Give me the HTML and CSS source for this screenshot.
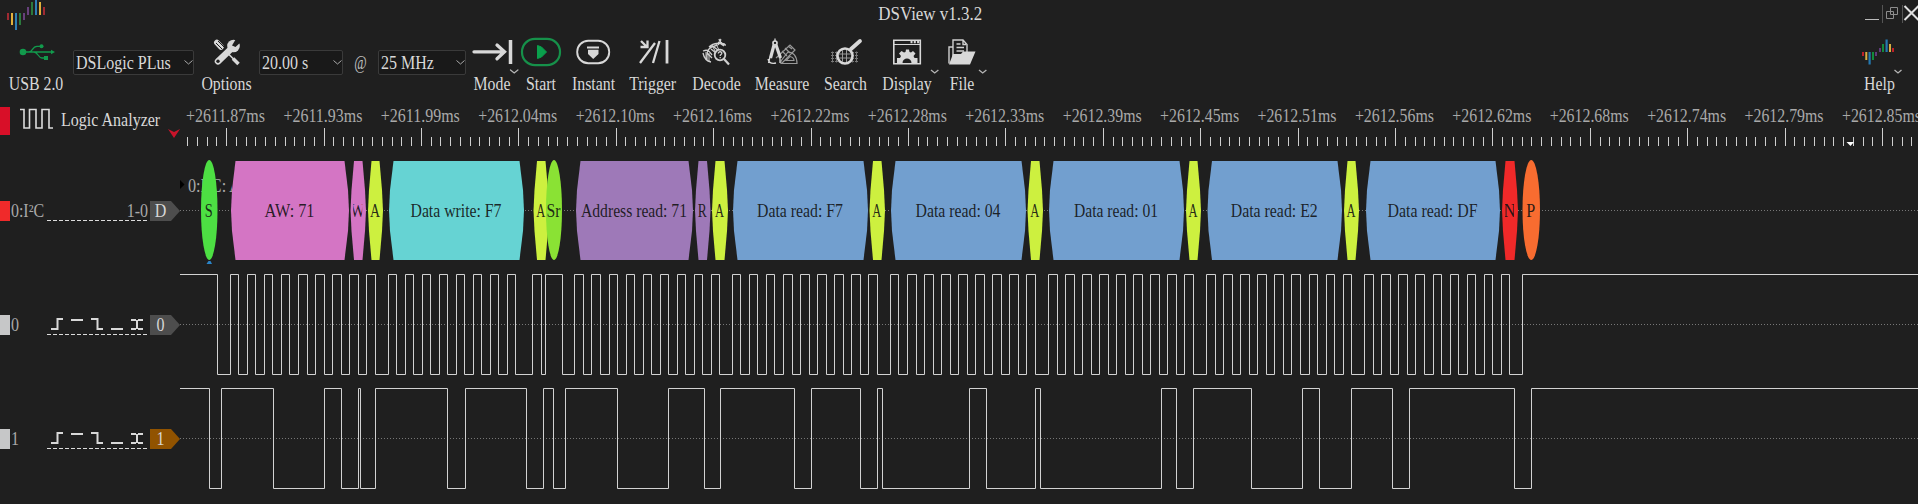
FILE: index.html
```html
<!DOCTYPE html>
<html lang="en">
<head>
<meta charset="utf-8">
<title>DSView v1.3.2</title>
<link rel="stylesheet" href="styles.css">
</head>
<body>
<header class="titlebar">
  <svg class="logo" width="46" height="32" viewBox="0 0 46 32">
    <path fill="#a02a32" d="M7 13h2v7h-2zM43 7h2v8h-2z"/><path fill="#e2b13c" d="M11 13h2v12h-2zM39 2h2v13h-2z"/>
    <path fill="#2f7fb5" d="M15 13h2v17h-2zM35 0h2v15h-2z"/><path fill="#2b7a3c" d="M19 13h2v12h-2zM31 2h2v13h-2z"/>
    <path fill="#67407c" d="M23 13h2v7h-2zM27 7h2v8h-2z"/>
  </svg>
  <h1 class="title">DSView v1.3.2</h1>
  <svg class="window-buttons" width="54" height="32" viewBox="0 0 54 32" fill="none">
    <path stroke="#bbb" d="M1 19.5h14"/><path stroke="#555" d="M18.500 5v18M38.500 5v18"/>
    <path stroke="#8d8d8d" d="M26.500 7.500h7v7h-7zM22.500 11.500h7v7h-7z"/>
    <path stroke="#e0e0e0" stroke-width="2" d="M40.500 6l14 14M54.500 6l-14 14"/>
  </svg>
</header>

<nav class="toolbar">
  <div class="tool tool-usb">
    <svg class="icon" viewBox="-20 0 40 34" fill="none" stroke="#129a4c" stroke-width="1.300">
      <circle cx="-14" cy="14" r="3.300" fill="#129a4c" stroke="none"/><path d="M-14 14H15M-8 14C-4 14-5 8.300 0 8.300h3M-3 14C1 14 1 20 5 20h4"/>
      <path fill="#129a4c" stroke="none" d="M14 11.700l4 2.300-4 2.300zM7 18h4v4h-4z"/><circle cx="4.500" cy="8.300" r="2" fill="#129a4c" stroke="none"/>
    </svg><span class="label">USB 2.0</span></div>
  <div class="combo combo-device"><span class="text">DSLogic PLus</span><svg class="caret" viewBox="0 0 9 5"><path d="M.5 .5l4 3.500 4-3.500"/></svg></div>
  <div class="tool tool-options">
    <svg class="icon" viewBox="-20 0 40 34" fill="none" stroke="#d8d8d8">
      <path stroke-width="5.500" stroke-linecap="round" d="M-10.200 4.500L-6 9"/><path stroke="#1f1f1f" stroke-width="1" d="M-11 5l6 6M-9 3l6 6"/>
      <path stroke-width="1.600" d="M1 15.500l6 6"/><path stroke-width="3.500" d="M6 20.500l5.500 5.500"/>
      <path stroke-width="6.500" stroke-linecap="round" d="M-9 23.300L6 9"/><circle cx="6.500" cy="8" r="6.300" fill="#d8d8d8" stroke="none"/>
      <path fill="#1f1f1f" stroke="none" d="M5 7.500L9.500 0l5 3.500L8.500 9z"/><circle cx="-9" cy="23.300" r="1.700" fill="#1f1f1f" stroke="none"/>
    </svg><span class="label">Options</span></div>
  <div class="combo combo-duration"><span class="text">20.00 s</span><svg class="caret" viewBox="0 0 9 5"><path d="M.5 .5l4 3.500 4-3.500"/></svg></div>
  <div class="at"><span class="label">@</span></div>
  <div class="combo combo-rate"><span class="text">25 MHz</span><svg class="caret" viewBox="0 0 9 5"><path d="M.5 .5l4 3.500 4-3.500"/></svg></div>
  <div class="tool tool-mode">
    <svg class="icon" viewBox="-20 4 40 34" fill="none" stroke="#d8d8d8" stroke-linecap="round">
      <path stroke-width="3.300" d="M-18 17.800H12M5 11l7.500 6.800-7.500 7"/><path stroke-width="3.500" stroke-linecap="butt" d="M18.500 6v24"/>
      <path class="menu-mark" d="M18.500 36l3.700 3 3.700-3"/>
    </svg><span class="label">Mode</span></div>
  <div class="tool tool-start">
    <svg class="icon" viewBox="-20 4 40 34" fill="none"><rect x="-19" y="4.800" width="38" height="26.400" rx="13" stroke="#16914a" stroke-width="2.200"/><path fill="#0aa04c" stroke="#0aa04c" stroke-linejoin="round" d="M-3.500 11.500v13l4-1.500 5-5-5-5z"/></svg><span class="label">Start</span></div>
  <div class="tool tool-instant">
    <svg class="icon" viewBox="-20 4 40 34" fill="none"><rect x="-15.800" y="6.800" width="32" height="22.400" rx="11" stroke="#d8d8d8" stroke-width="1.900"/><path fill="#d8d8d8" d="M-6 12.500H6v2H-6zM-5 15.800H5.500V20L.2 25-5 20z"/></svg><span class="label">Instant</span></div>
  <div class="tool tool-trigger">
    <svg class="icon" viewBox="-20 4 40 34" fill="none" stroke="#d8d8d8" stroke-width="2.300"><path d="M-12 7l6 6M-12.500 13h7v-6.500M-13 29L2 9M0 29L6.500 7" /><path stroke-width="2.800" d="M14 6v23.500"/></svg><span class="label">Trigger</span></div>
  <div class="tool tool-decode">
    <svg class="icon" viewBox="-20 4 40 34" fill="none" stroke="#d0d0d0" stroke-width="1.300">
      <path d="M-13 17c5-2 6 0 9 4M-13 19c1 5 3 8 8 9M-9 27c0-5-1-9 2-12 4-5 8-1 11-6 1-1 0-3 1-4M-7 13c5-5 13-4 16-3M3 5c1 4 3 6 7 6M-9 19l5 5M-5 15l5 4M-2 13l5 4M2 8l6 4"/>
      <path stroke-width="1" d="M-10 18v7M-7 19v8M-4 11l4 8M0 10l3 6M4 7l4 4"/>
      <circle cx="4" cy="21" r="5.300" fill="#1f1f1f" stroke-width="1.800"/><path stroke-width="2.200" d="M8 25l5 5.500"/><path d="M2.300 19.500c0-2.500 3.800-2.200 3.500 0-.2 1.200-1.600 1-1.600 2.400m0 1v1.300"/>
    </svg><span class="label">Decode</span></div>
  <div class="tool tool-measure">
    <svg class="icon" viewBox="-20 4 40 34" fill="none" stroke="#999" stroke-width="1.200">
      <path d="M-6 24L8 11l5 5L0 29M0 17l5 5M3 14l5 5M6 12l4 3"/><path d="M-1 29.500V27L6 18c5 0 9 4 9 11.500zM4 26.500l4-4c2 .5 4 2 4 4z"/>
      <circle cx="-7" cy="9" r="2" stroke="#d8d8d8" stroke-width="1.700"/><path stroke="#d8d8d8" stroke-width="1.300" d="M-7 4.500v3"/>
      <path stroke="#d8d8d8" stroke-width="3.200" d="M-8 11L-11.500 24M-6 11l4.500 13"/><path stroke="#d8d8d8" stroke-width="1.300" d="M-12 23l-1.500 6M-2 23l0 6M-14 25c1 4 4 5 8 4"/>
    </svg><span class="label">Measure</span></div>
  <div class="tool tool-search">
    <svg class="icon" viewBox="-20 4 40 34" fill="none" stroke="#777" stroke-width="1">
      <path stroke-dasharray="3 1" d="M-15 18.500h27M-15 21.500h27M-15 24.500h27M-15 27.500h27"/><path stroke-dasharray="1 3" stroke-width="11" d="M-14 23h26"/>
      <path stroke="#d8d8d8" stroke-width="3.800" stroke-linecap="round" d="M5 15L14 7"/><circle cx="-1" cy="22" r="7.500" fill="#1f1f1f" stroke="#d8d8d8" stroke-width="2.600"/>
      <path stroke="#999" d="M-7 20h12M-7 24h12M-3.500 16v12M.5 16v12"/>
    </svg><span class="label">Search</span></div>
  <div class="tool tool-display">
    <svg class="icon" viewBox="-20 4 40 34" fill="none" stroke="#d8d8d8"><path stroke-width="1.600" d="M-13.200 6.300h26.500v23.500h-26.500z"/><path d="M-13 10.500h26"/><path stroke-width="2.200" stroke-dasharray="2 1.300" d="M3.500 8.100h9"/>
      <path fill="#d8d8d8" stroke="none" d="M-10 29v-5h3l1-2-2-2.500 2.500-2.500 2.500 1.500 1.500-.5.500-2.500h3l.5 2.500 1.500.5L6 17l2.500 2.500-2 2.500 1 2h3v5H4.500c0-6-9-6-9 0z"/>
      <path class="menu-mark" d="M24 36l3.700 3 3.700-3"/>
    </svg><span class="label">Display</span></div>
  <div class="tool tool-file">
    <svg class="icon" viewBox="-20 4 40 34" fill="none" stroke="#d0d0d0" stroke-width="1.400"><path d="M-9 26V6H1l4 4.500v7.500M1 6v4.500H4M-5.500 10h4M-5.500 13.500H2M-5.500 17H2M-9 13h-4v16.500"/>
      <path fill="#d8d8d8" stroke="none" d="M-13 30.500L-9 20h8l2-2.500h12.500L8 30.500z"/><path class="menu-mark" d="M17 36l3.700 3 3.700-3"/>
    </svg><span class="label">File</span></div>
  <div class="tool tool-help">
    <svg class="icon" viewBox="-20 0 40 34">
      <path fill="#bd2028" d="M-17 14h2v4h-2zM13 10h2v4h-2z"/><path fill="#d9ae42" d="M-13.700 14h2v8h-2zM10 6h2v8h-2z"/>
      <path fill="#2478b0" d="M-10.500 14h2.200v12.500h-2.200zM6.500 1.500h2.200V14H6.500z"/><path fill="#128a3c" d="M-7 14h2v8h-2zM3 6h2v8H3z"/>
      <path fill="#613a7c" d="M-4 14h2v4h-2zM0 10h2v4H0z"/><path class="menu-mark" d="M15.500 32l3.500 3 3.500-3"/>
    </svg><span class="label">Help</span></div>
</nav>

<main class="workspace">
  <aside class="channels">
    <div class="analyzer">
      <i class="analyzer-mark"></i>
      <svg class="analyzer-icon" width="34" height="22" viewBox="0 0 34 22" fill="none" stroke="#dcdcdc" stroke-width="1.600"><path d="M0 1.500h4V20h5.500V1.500h6.500V20h6V1.500h7V20h4"/></svg>
      <span class="text">Logic Analyzer</span>
      <svg class="cursor-mark" width="12" height="9" viewBox="0 0 12 9"><path fill="#c8142a" d="M0 0l6 3 6-3-6 9z"/></svg>
    </div>
    <div class="channel channel-decoder"><i class="swatch"></i><span class="text name">0:I²C</span><div class="slots"><span class="text pins">1-0</span></div><b class="tag"><span class="text">D</span></b></div>
    <div class="channel"><i class="swatch"></i><span class="text name">0</span><div class="slots"><svg class="edges" width="100" height="20" viewBox="0 0 100 20"><path d="M4 14h6.500V4H16M24 5h12M44 4h6.500v10H56M64 14h12M84 5h5M91 5h5M84 14h5M91 14h5M90 5v9"/></svg></div><b class="tag"><span class="text">0</span></b></div>
    <div class="channel channel-orange"><i class="swatch"></i><span class="text name">1</span><div class="slots"><svg class="edges" width="100" height="20" viewBox="0 0 100 20"><path d="M4 14h6.500V4H16M24 5h12M44 4h6.500v10H56M64 14h12M84 5h5M91 5h5M84 14h5M91 14h5M90 5v9"/></svg></div><b class="tag"><span class="text">1</span></b></div>
  </aside>
  <svg class="plot" id="plot" width="1738" height="404" viewBox="180 100 1738 404"></svg>
</main>
<script src="plot.js"></script>
</body>
</html>
```

FILE: styles.css
```css
* { box-sizing: border-box; }
body {
  margin: 0;
  width: 1918px;
  height: 504px;
  overflow: hidden;
  display: flex;
  flex-direction: column;
  background: #1f1f1f;
  color: #d8d8d8;
  font: 18px/20px "Liberation Serif", serif;
}
svg { display: block; flex: none; }

.titlebar { display: flex; justify-content: space-between; height: 32px; }
.title {
  margin: 0 50px 0 0;
  padding: 4px 0 0;
  font-size: 18px;
  font-weight: normal;
  line-height: 20px;
  transform: scaleX(.94);
}

.toolbar { display: flex; height: 68px; }
.tool { display: flex; flex-direction: column; align-items: center; padding-top: 6px; height: 68px; }
.tool .icon { width: 40px; height: 34px; overflow: visible; }
.label { white-space: nowrap; transform: scaleX(.88); margin-top: 2px; }
.menu-mark { fill: none; stroke: #b5b5b5; stroke-width: 1.3; }
.tool-usb { width: 73px; }
.tool-options { width: 65px; }
.tool-mode { width: 51px; }
.tool-start { width: 48px; }
.tool-instant { width: 56px; }
.tool-trigger { width: 63px; }
.tool-decode { width: 64px; }
.tool-measure { width: 68px; }
.tool-search { width: 59px; }
.tool-display { width: 63px; }
.tool-file { width: 48px; }
.tool-help { width: 78px; margin-left: auto; }

.combo {
  display: flex;
  align-items: center;
  justify-content: space-between;
  height: 25px;
  margin-top: 18px;
  padding: 0 0 0 2px;
  background: #191919;
  border: 1px solid #3a3a3a;
  border-radius: 2px;
}
.combo-device { width: 121px; }
.combo-duration { width: 84px; }
.combo-rate { width: 88px; }
.combo .text { width: 0; }
.caret { width: 9px; height: 5px; fill: none; stroke: #aaa; }
.text { display: block; white-space: nowrap; transform: scaleX(.89); transform-origin: left center; }
.at { width: 35px; padding-top: 19px; text-align: center; color: #c0c0c0; }
.at .label { display: block; transform: scaleX(.75); }

.workspace { display: flex; height: 404px; }
.channels { width: 180px; }
.analyzer { display: flex; height: 54px; padding-top: 7px; }
.analyzer-mark { width: 10px; height: 28px; background: #d80f28; }
.analyzer-icon { margin: 1px 7px 0 10px; }
.analyzer .text { width: 107px; margin-top: 3px; }
.cursor-mark { margin-top: 22px; }
.channel { display: flex; align-items: center; height: 114px; }
.swatch { width: 10px; height: 20px; background: #c6c7c8; }
.channel-decoder .swatch { background: #f02a2a; }
.name { width: 36px; padding-left: 1px; color: #a9a9a9; }
.slots {
  width: 101px;
  height: 21px;
  margin: 0 3px 0 1px;
  background: repeating-linear-gradient(90deg, #dcdcdc 0 4px, transparent 4px 6px) 0 19px / 100% 1px no-repeat;
}
.edges { fill: none; stroke: #d8d8d8; stroke-width: 2; }
.pins { color: #a9a9a9; text-align: right; transform-origin: right center; }
.tag {
  display: flex;
  justify-content: center;
  width: 30px;
  height: 20px;
  padding-right: 9px;
  margin-left: -1px;
  background: #4d4d4d;
  clip-path: polygon(0 0, 70% 0, 100% 50%, 70% 100%, 0 100%);
  font-weight: normal;
}
.tag .text { transform-origin: center; }
.channel-orange .tag { background: #915300; }

.plot text { font: 18px "Liberation Serif", serif; }
.time { fill: #a9a9a9; }
.tick { stroke: #cfcfcf; }
.base { stroke: #777; stroke-dasharray: 1 2; }
.wave { fill: none; stroke: #d2d2d2; }
.plot .note { fill: #111; fill-opacity: .9; }
.decoder-title { fill: #a9a9a9; }
```

FILE: plot.js
```js
const NS = 'http://www.w3.org/2000/svg';
const plot = document.getElementById('plot');

function add(parent, name, attrs, text) {
  const node = document.createElementNS(NS, name);
  for (const key in attrs) node.setAttribute(key, attrs[key]);
  if (text) node.textContent = text;
  parent.appendChild(node);
  return node;
}

// Time ruler: one label per ten ticks
const times = ['2611.87', '2611.93', '2611.99', '2612.04', '2612.10', '2612.16', '2612.22', '2612.28', '2612.33',
  '2612.39', '2612.45', '2612.51', '2612.56', '2612.62', '2612.68', '2612.74', '2612.79', '2612.85'];
for (let i = -4; i <= 173; i++) {
  const x = Math.floor(226.6 + i * 9.741) + 0.5;
  add(plot, 'path', { class: 'tick', d: `M${x} ${i % 10 ? 137 : 128}V146` });
}
times.forEach((t, i) => add(plot, 'text', {
  class: 'time', x: 186 + i * 97.41, y: 121.5, textLength: 79, lengthAdjust: 'spacingAndGlyphs'
}, `+${t}ms`));
add(plot, 'path', { fill: '#fff', d: 'M1846.500 142h7.500l-3.500 4z' });

// Row baselines
for (const y of [210.5, 324.5, 438.5]) add(plot, 'path', { class: 'base', d: `M180 ${y}H1918` });

// Logic traces: both start high and toggle at each listed column
function wave(top, columns) {
  let d = `M180 ${top}`;
  let high = true;
  for (const x of columns) {
    high = !high;
    d += `H${x + 0.5}V${high ? top : top + 100}`;
  }
  add(plot, 'path', { class: 'wave', d: d + 'H1918' });
}
wave(274.5, [217, 230, 238, 247, 255, 264, 272, 281, 289, 298, 307, 315, 324, 332, 341, 349, 358, 366, 375,
  388, 396, 405, 413, 422, 430, 439, 447, 456, 464, 473, 481, 490, 498, 507, 515, 532, 541, 545, 562,
  574, 583, 591, 600, 609, 617, 626, 634, 643, 651, 660, 668, 677, 685, 694, 702, 711, 719,
  732, 740, 749, 757, 766, 774, 783, 792, 800, 809, 817, 826, 834, 843, 851, 860, 868, 877,
  890, 898, 907, 916, 924, 933, 941, 950, 958, 967, 975, 984, 992, 1001, 1009, 1018, 1026, 1035,
  1048, 1057, 1065, 1074, 1082, 1091, 1099, 1108, 1116, 1125, 1133, 1142, 1150, 1159, 1167, 1176, 1184, 1193,
  1206, 1215, 1223, 1232, 1240, 1249, 1257, 1266, 1274, 1283, 1291, 1300, 1309, 1317, 1326, 1334, 1343, 1351,
  1364, 1373, 1381, 1390, 1398, 1407, 1415, 1424, 1433, 1441, 1450, 1458, 1467, 1475, 1484, 1492, 1501, 1509, 1522]);
wave(388.5, [209, 221, 273, 324, 341, 358, 360, 375, 447, 465, 526, 543, 553, 565, 617, 668, 704, 720,
  794, 811, 860, 877, 882, 969, 986, 1035, 1040, 1161, 1176, 1193, 1251, 1302, 1319, 1351, 1392, 1409, 1514, 1531]);

// Decoder row
add(plot, 'path', { fill: '#000', d: 'M180 180l4.500 4.500-4.500 4.500z' });
const caption = add(plot, 'svg', { x: 187, y: 170, width: 45, height: 30 });
add(caption, 'text', { class: 'decoder-title', x: 1, y: 22, textLength: 53, lengthAdjust: 'spacingAndGlyphs' }, '0:I²C: A');
add(plot, 'path', { fill: '#2a84c8', d: 'M206.500 264h5.500l-1.500-3h-2z' });

// [left, right, colour, caption, caption width, shape]
const BLUE = '#729fcf', LIME = '#cdf03f';
const notes = [
  [201, 217.5, '#4ddf43', 'S', 8, 'round'],
  [231, 349, '#d475c4', 'AW: 71', 50],
  [350.5, 366, '#d475c4', 'W', 15, 'cut'],
  [368, 383, LIME, 'A', 10],
  [389, 524, '#66d3d3', 'Data write: F7', 91],
  [533.5, 549, LIME, 'A', 9],
  [546, 562, '#8ae234', 'Sr', 14, 'round'],
  [576, 693, '#9e79b8', 'Address read: 71', 106],
  [695, 710.5, '#9e79b8', 'R', 9],
  [712, 728, LIME, 'A', 9],
  [733, 868, BLUE, 'Data read: F7', 86],
  [869.5, 885, LIME, 'A', 9],
  [891, 1026, BLUE, 'Data read: 04', 85],
  [1027.5, 1043, LIME, 'A', 9],
  [1049, 1184, BLUE, 'Data read: 01', 84],
  [1186, 1201, LIME, 'A', 9],
  [1207.5, 1342, BLUE, 'Data read: E2', 87],
  [1344, 1359, LIME, 'A', 9],
  [1366, 1500, BLUE, 'Data read: DF', 90],
  [1502, 1518, '#ef2929', 'N', 12, 'cut'],
  [1522.5, 1540, '#f86c30', 'P', 9, 'round']
];
for (const [l, r, fill, caption, width, shape] of notes) {
  const mid = (l + r) / 2;
  if (shape === 'round') {
    add(plot, 'ellipse', { cx: mid, cy: 210, rx: (r - l) / 2, ry: 50, fill });
  } else {
    const inset = r - l > 20 ? 4.5 : 3.5;
    add(plot, 'path', { fill, d: `M${l} 210.500L${l + 1} 190L${l + inset} 161H${r - inset}L${r - 1} 190L${r} 210.500L${r - 1} 231L${r - inset} 260H${l + inset}L${l + 1} 231z` });
  }
  const window = shape === 'cut' ? 9 : width + 8;
  const box = add(plot, 'svg', { x: mid - window / 2 - 0.5, y: 196, width: window, height: 30 });
  add(box, 'text', { class: 'note', x: (window - width) / 2, y: 21, textLength: width, lengthAdjust: 'spacingAndGlyphs' }, caption);
}
```
